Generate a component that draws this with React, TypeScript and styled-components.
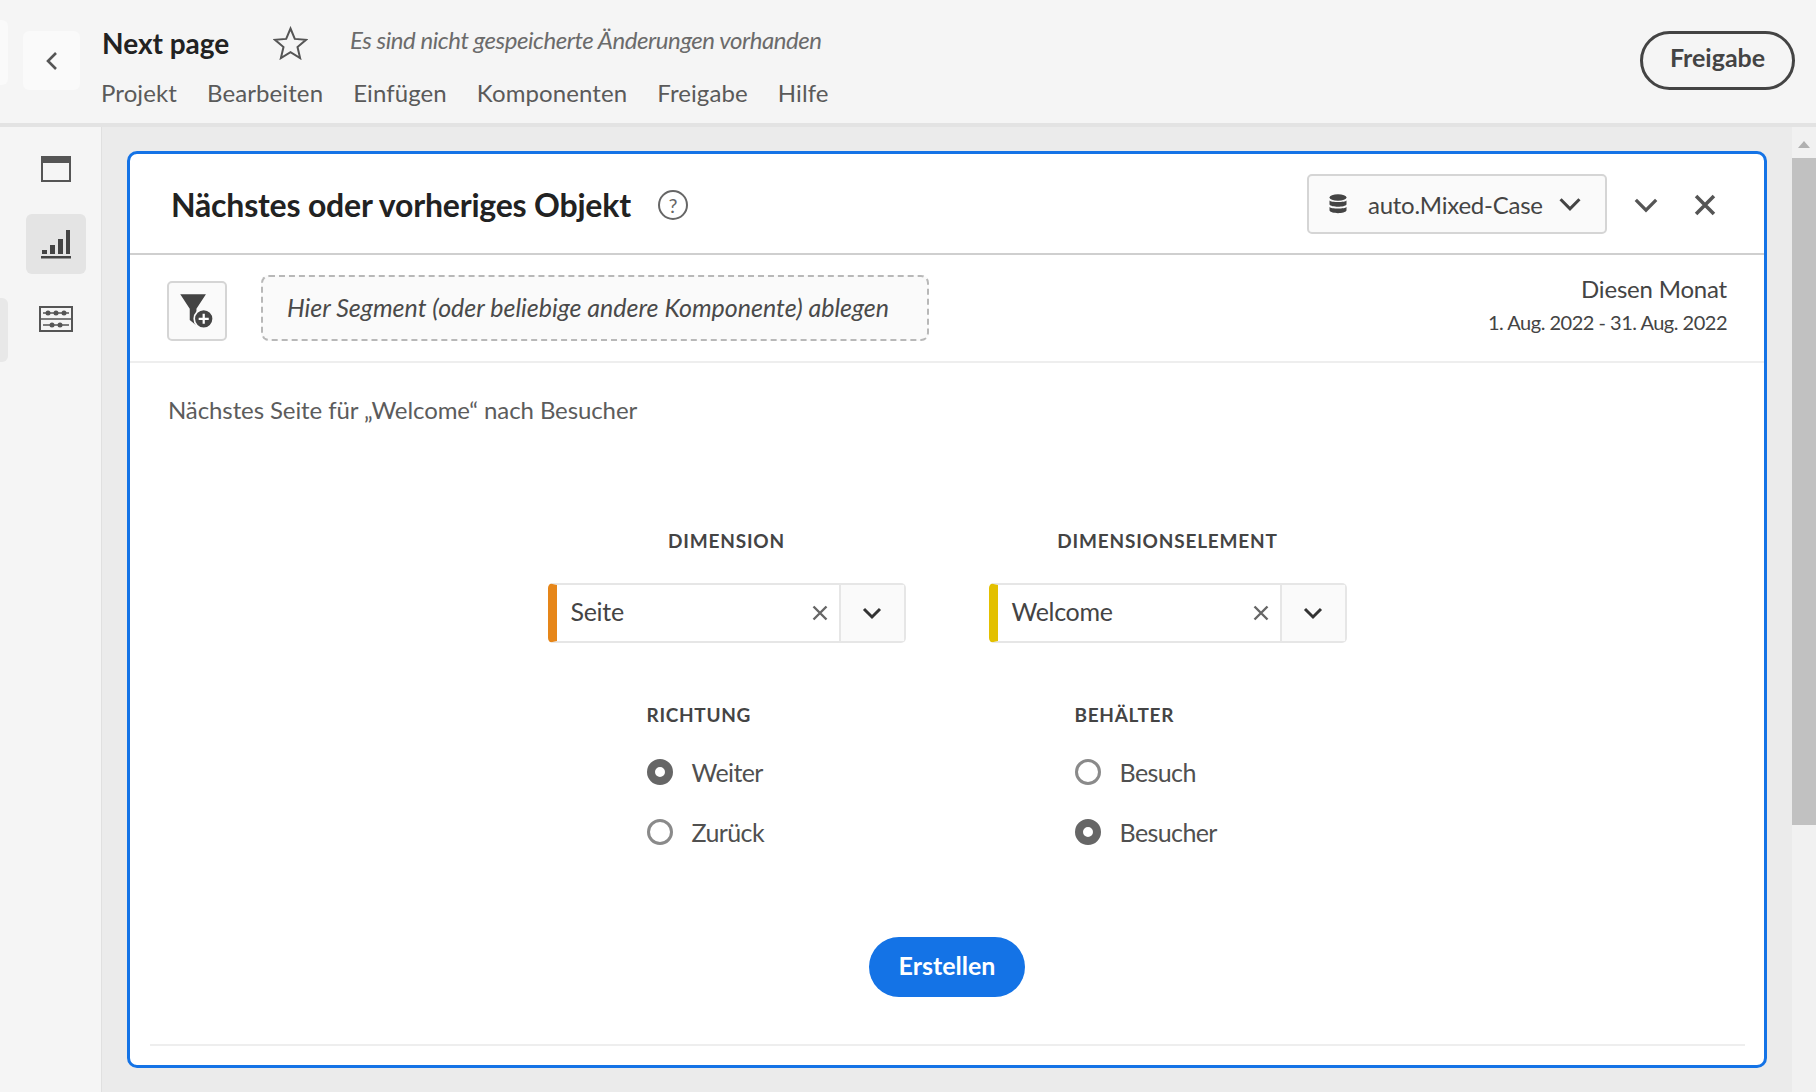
import React from "react";
import styled, { createGlobalStyle } from "styled-components";

const Global = createGlobalStyle`
  html, body { margin: 0; padding: 0; height: 100%; overflow: hidden; }
  body { font-family: "Lato", "Noto Sans", "Liberation Sans", sans-serif; color: #2c2c2c; background: #ebebeb; }
  * { box-sizing: border-box; }
`;

const Page = styled.div`
  position: relative;
  width: 1816px;
  height: 1092px;
  display: flex;
  flex-direction: column;
  overflow: hidden;
`;
const Sliver = styled.div<{ $top: number; $h: number; $bg: string }>`
  position: absolute;
  left: 0;
  top: ${(p) => p.$top}px;
  width: 8px;
  height: ${(p) => p.$h}px;
  background: ${(p) => p.$bg};
  border-radius: 0 6px 6px 0;
`;
const Header = styled.header`
  height: 127px;
  flex: none;
  background: #f5f5f5;
  border-bottom: 4px solid #e3e3e3;
  display: flex;
  align-items: flex-start;
  padding: 31px 21px 0 23px;
`;
const BackButton = styled.div`
  width: 57px;
  height: 59px;
  background: #fafafa;
  border-radius: 6px;
  display: flex;
  align-items: center;
  justify-content: center;
  color: #555;
  flex: none;
`;
const TitleBlock = styled.div`
  margin-left: 21px;
  margin-top: -8px;
  flex: 1;
`;
const TitleRow = styled.div`
  display: flex;
  align-items: center;
  height: 40px;
`;
const ProjectName = styled.div`
  font-size: 28px;
  font-weight: 700;
  color: #222;
  letter-spacing: 0;
  width: 171px;
  margin-left: 1px;
`;
const StarWrap = styled.div`
  width: 77px;
  display: flex;
`;
const Unsaved = styled.div`
  font-size: 24px;
  font-style: italic;
  color: #6b6b6b;
  letter-spacing: -0.45px;
  margin-top: -7px;
`;
const Menu = styled.nav`
  display: flex;
  gap: 30px;
  margin-top: 15px;
`;
const MenuItem = styled.span`
  font-size: 24px;
  color: #5a5a5a;
  letter-spacing: 0.1px;
`;
const ShareButton = styled.div`
  width: 155px;
  height: 59px;
  border: 3px solid #444;
  border-radius: 30px;
  display: flex;
  align-items: center;
  justify-content: center;
  font-size: 25px;
  font-weight: 700;
  color: #444;
  padding-bottom: 8px;
  flex: none;
`;
const Body = styled.div`
  flex: 1;
  display: flex;
  min-height: 0;
`;
const Sidebar = styled.aside`
  width: 102px;
  flex: none;
  background: #f5f5f5;
  border-right: 1px solid #e0e0e0;
  padding: 12px 0 0 26px;
  display: flex;
  flex-direction: column;
  gap: 15px;
`;
const RailItem = styled.div<{ $active?: boolean }>`
  width: 60px;
  height: 60px;
  border-radius: 6px;
  display: flex;
  align-items: center;
  justify-content: center;
  color: #555;
  background: ${(p) => (p.$active ? "#e4e4e4" : "transparent")};
`;
const Workspace = styled.main`
  flex: 1;
  background: #ebebeb;
  padding: 24px 25px 24px 25px;
  min-width: 0;
`;
const Panel = styled.section`
  height: 917px;
  background: #fff;
  border: 3px solid #1473e6;
  border-radius: 10px;
  display: flex;
  flex-direction: column;
`;
const PanelHead = styled.div`
  height: 101px;
  flex: none;
  border-bottom: 2px solid #cfcfcf;
  display: flex;
  align-items: center;
  padding: 2px 48px 0 41px;
`;
const PanelTitle = styled.h2`
  margin: 0;
  font-size: 32px;
  font-weight: 700;
  color: #222;
  letter-spacing: -0.2px;
`;
const HelpIcon = styled.div`
  width: 30px;
  height: 30px;
  margin-left: 27px;
  border: 2px solid #666;
  border-radius: 50%;
  color: #666;
  font-size: 20px;
  display: flex;
  align-items: center;
  justify-content: center;
`;
const Spacer = styled.div`
  flex: 1;
`;
const DataView = styled.div`
  width: 300px;
  height: 60px;
  margin-top: -1px;
  background: #fafafa;
  border: 2px solid #d5d5d5;
  border-radius: 5px;
  display: flex;
  align-items: center;
  padding: 0 22px 0 20px;
  font-size: 24px;
  color: #444;
  letter-spacing: -0.25px;
`;
const DataName = styled.span`
  margin-left: 21px;
  flex: 1;
`;
const HeadIcon = styled.div<{ $gap: number }>`
  margin-left: ${(p) => p.$gap}px;
  display: flex;
  color: #555;
`;
const FilterRow = styled.div`
  height: 108px;
  flex: none;
  border-bottom: 2px solid #eeeeee;
  display: flex;
  align-items: center;
  padding: 0 37px 0 37px;
`;
const FilterButton = styled.div`
  width: 60px;
  height: 60px;
  margin-top: 6px;
  background: #fafafa;
  border: 2px solid #d5d5d5;
  border-radius: 5px;
  display: flex;
  align-items: center;
  justify-content: center;
`;
const DropZone = styled.div`
  width: 668px;
  height: 66px;
  margin-left: 34px;
  background: #fafafa;
  border: 2px dashed #b8b8b8;
  border-radius: 8px;
  display: flex;
  align-items: center;
  padding: 0 0 2px 24px;
  font-size: 25px;
  font-style: italic;
  color: #4a4a4a;
`;
const DateBlock = styled.div`
  text-align: right;
  color: #444;
  margin-bottom: 9px;
`;
const DateName = styled.div`
  font-size: 24px;
  letter-spacing: -0.2px;
`;
const DateRange = styled.div`
  font-size: 20px;
  letter-spacing: -0.5px;
  margin-top: 7px;
`;
const Content = styled.div`
  flex: 1;
  display: flex;
  flex-direction: column;
  padding: 0 15px 0 15px;
`;
const Summary = styled.p`
  margin: 32px 0 0 23px;
  font-size: 24px;
  color: #5c5c5c;
  letter-spacing: -0.1px;
`;
const FormGrid = styled.div`
  display: grid;
  grid-template-columns: 358px 358px;
  column-gap: 83px;
  justify-content: center;
  margin-top: 105px;
`;
const CenterLabel = styled.div`
  text-align: center;
  font-size: 19px;
  font-weight: 700;
  letter-spacing: 0.8px;
  color: #444;
  margin-bottom: 30px;
  line-height: 24px;
`;
const Combo = styled.div<{ $accent: string }>`
  height: 60px;
  display: flex;
  align-items: stretch;
  border: 2px solid #e6e6e6;
  border-left: 9px solid ${(p) => p.$accent};
  border-radius: 5px;
  background: #fff;
`;
const ComboText = styled.div`
  flex: 1;
  display: flex;
  align-items: center;
  padding: 0 0 4px 14px;
  font-size: 25px;
  color: #444;
  letter-spacing: -0.3px;
`;
const ComboClear = styled.div`
  width: 27px;
  display: flex;
  align-items: center;
  color: #666;
`;
const ComboToggle = styled.div`
  width: 65px;
  background: #fafafa;
  border-left: 2px solid #e6e6e6;
  display: flex;
  align-items: center;
  justify-content: center;
  color: #333;
`;
const RadioGroup = styled.div<{ $indent: number }>`
  padding-left: ${(p) => p.$indent}px;
  margin-top: 60px;
`;
const GroupLabel = styled.div`
  font-size: 19px;
  font-weight: 700;
  letter-spacing: 0.7px;
  color: #444;
  line-height: 24px;
  margin-bottom: 15px;
`;
const RadioRow = styled.div`
  height: 60px;
  display: flex;
  align-items: center;
  gap: 19px;
  font-size: 25px;
  color: #505050;
  letter-spacing: -0.6px;
`;
const RadioDot = styled.span<{ $on?: boolean }>`
  width: 26px;
  height: 26px;
  border-radius: 50%;
  flex: none;
  background: #fff;
  border: ${(p) => (p.$on ? "8px solid #666" : "3px solid #8a8a8a")};
`;
const Actions = styled.div`
  display: flex;
  justify-content: center;
  margin-top: 75px;
`;
const CreateButton = styled.div`
  width: 156px;
  height: 60px;
  border-radius: 30px;
  background: #1473e6;
  color: #fff;
  font-size: 25px;
  font-weight: 700;
  display: flex;
  align-items: center;
  justify-content: center;
  padding-bottom: 5px;
`;
const FootRule = styled.div`
  height: 2px;
  background: #eeeeee;
  margin: 47px 4px 0 5px;
`;
const ScrollTrack = styled.div`
  width: 24px;
  flex: none;
  background: #f1f1f1;
  display: flex;
  flex-direction: column;
  align-items: center;
`;
const ScrollArrow = styled.div`
  height: 31px;
  padding-top: 14px;
  display: flex;
  justify-content: center;
`;
const ScrollThumb = styled.div`
  width: 100%;
  height: 667px;
  background: #c1c1c1;
`;

const Chevron = ({ size = 22, w = 3 }: { size?: number; w?: number }) => (
  <svg width={size} height={size} viewBox="0 0 22 22" fill="none" stroke="currentColor" strokeWidth={w}>
    <path d="M3 7l8 8 8-8" />
  </svg>
);
const Cross = ({ size = 16, w = 2.4 }: { size?: number; w?: number }) => (
  <svg width={size} height={size} viewBox="0 0 16 16" fill="none" stroke="currentColor" strokeWidth={w}>
    <path d="M1.5 1.5l13 13M14.5 1.5l-13 13" />
  </svg>
);

const Radio = ({ on, children }: { on?: boolean; children: React.ReactNode }) => (
  <RadioRow>
    <RadioDot $on={on} />
    <span>{children}</span>
  </RadioRow>
);

export default function App() {
  return (
    <>
      <Global />
      <Page>
        <Header>
          <BackButton>
            <svg width="14" height="20" viewBox="0 0 14 20" fill="none" stroke="currentColor" strokeWidth="2.6">
              <path d="M11 2L3 10l8 8" />
            </svg>
          </BackButton>
          <TitleBlock>
            <TitleRow>
              <ProjectName>Next page</ProjectName>
              <StarWrap>
                <svg width="35" height="34" viewBox="0 0 35 34" fill="none" stroke="#555" strokeWidth="2">
                  <path d="M17.5 2.5l4.3 10.4 11.2.9-8.5 7.3 2.6 11-9.6-5.9-9.6 5.9 2.6-11L2 13.8l11.2-.9z" />
                </svg>
              </StarWrap>
              <Unsaved>Es sind nicht gespeicherte Änderungen vorhanden</Unsaved>
            </TitleRow>
            <Menu>
              {["Projekt", "Bearbeiten", "Einfügen", "Komponenten", "Freigabe", "Hilfe"].map((m) => (
                <MenuItem key={m}>{m}</MenuItem>
              ))}
            </Menu>
          </TitleBlock>
          <ShareButton>Freigabe</ShareButton>
        </Header>
        <Body>
          <Sidebar>
            <RailItem>
              <svg width="32" height="28" viewBox="0 0 32 28" fill="none" stroke="#555" strokeWidth="2">
                <rect x="2" y="2" width="28" height="24" />
                <rect x="2" y="2" width="28" height="5" fill="#555" />
              </svg>
            </RailItem>
            <RailItem $active>
              <svg width="32" height="32" viewBox="0 0 32 32" fill="#444">
                <rect x="1" y="28" width="30" height="2.5" />
                <rect x="2" y="22" width="5" height="4" />
                <rect x="10" y="17" width="5" height="9" />
                <rect x="18" y="11" width="5" height="15" />
                <rect x="26" y="2" width="4" height="24" />
              </svg>
            </RailItem>
            <RailItem>
              <svg width="34" height="28" viewBox="0 0 34 28" fill="none" stroke="#555" strokeWidth="2">
                <rect x="1" y="2" width="32" height="24" />
                <path d="M1 14h32M4 8h26M4 20h26" strokeWidth="1.5" />
                <g fill="#555" stroke="none">
                  <circle cx="9" cy="8" r="2.5" />
                  <circle cx="17" cy="8" r="2.5" />
                  <circle cx="25" cy="8" r="2.5" />
                  <circle cx="13" cy="20" r="2.5" />
                  <circle cx="21" cy="20" r="2.5" />
                </g>
              </svg>
            </RailItem>
          </Sidebar>
          <Workspace>
            <Panel>
              <PanelHead>
                <PanelTitle>Nächstes oder vorheriges Objekt</PanelTitle>
                <HelpIcon>?</HelpIcon>
                <Spacer />
                <DataView>
                  <svg width="18" height="20" viewBox="0 0 18 20" fill="#444">
                    <ellipse cx="9" cy="3.5" rx="8.5" ry="3.2" />
                    <path d="M.5 6.5C2 8.5 16 8.5 17.5 6.5v4c-1.500 3-15.500 3-17 0z" />
                    <path d="M.5 13C2 15 16 15 17.500 13v3.500c-1.500 3.500-15.500 3.500-17 0z" />
                  </svg>
                  <DataName>auto.Mixed-Case</DataName>
                  <Chevron size={26} w={2.6} />
                </DataView>
                <HeadIcon $gap={25}>
                  <Chevron size={28} w={2.6} />
                </HeadIcon>
                <HeadIcon $gap={34}>
                  <Cross size={22} w={2.6} />
                </HeadIcon>
              </PanelHead>
              <FilterRow>
                <FilterButton>
                  <svg width="36" height="38" viewBox="0 0 32 34">
                    <path d="M1 2h23l-8.500 13v15l-6-5V15z" fill="#444" />
                    <circle cx="22" cy="24" r="8.500" fill="#444" stroke="#fafafa" strokeWidth="1.500" />
                    <path d="M22 19.500v9M17.500 24h9" stroke="#fff" strokeWidth="2" />
                  </svg>
                </FilterButton>
                <DropZone>Hier Segment (oder beliebige andere Komponente) ablegen</DropZone>
                <Spacer />
                <DateBlock>
                  <DateName>Diesen Monat</DateName>
                  <DateRange>1. Aug. 2022 - 31. Aug. 2022</DateRange>
                </DateBlock>
              </FilterRow>
              <Content>
                <Summary>Nächstes Seite für „Welcome“ nach Besucher</Summary>
                <FormGrid>
                  <div>
                    <CenterLabel>DIMENSION</CenterLabel>
                    <Combo $accent="#e68619">
                      <ComboText>Seite</ComboText>
                      <ComboClear>
                        <Cross />
                      </ComboClear>
                      <ComboToggle>
                        <Chevron />
                      </ComboToggle>
                    </Combo>
                  </div>
                  <div>
                    <CenterLabel>DIMENSIONSELEMENT</CenterLabel>
                    <Combo $accent="#e3c000">
                      <ComboText>Welcome</ComboText>
                      <ComboClear>
                        <Cross />
                      </ComboClear>
                      <ComboToggle>
                        <Chevron />
                      </ComboToggle>
                    </Combo>
                  </div>
                  <RadioGroup $indent={99}>
                    <GroupLabel>RICHTUNG</GroupLabel>
                    <Radio on>Weiter</Radio>
                    <Radio>Zurück</Radio>
                  </RadioGroup>
                  <RadioGroup $indent={86}>
                    <GroupLabel>BEHÄLTER</GroupLabel>
                    <Radio>Besuch</Radio>
                    <Radio on>Besucher</Radio>
                  </RadioGroup>
                </FormGrid>
                <Actions>
                  <CreateButton>Erstellen</CreateButton>
                </Actions>
                <FootRule />
              </Content>
            </Panel>
          </Workspace>
          <ScrollTrack>
            <ScrollArrow>
              <svg width="12" height="7" viewBox="0 0 12 7" fill="#b0b0b0">
                <path d="M6 0l6 7H0z" />
              </svg>
            </ScrollArrow>
            <ScrollThumb />
          </ScrollTrack>
        </Body>
        <Sliver $top={20} $h={65} $bg="#fafafa" />
        <Sliver $top={298} $h={64} $bg="#e8e8e8" />
      </Page>
    </>
  );
}
